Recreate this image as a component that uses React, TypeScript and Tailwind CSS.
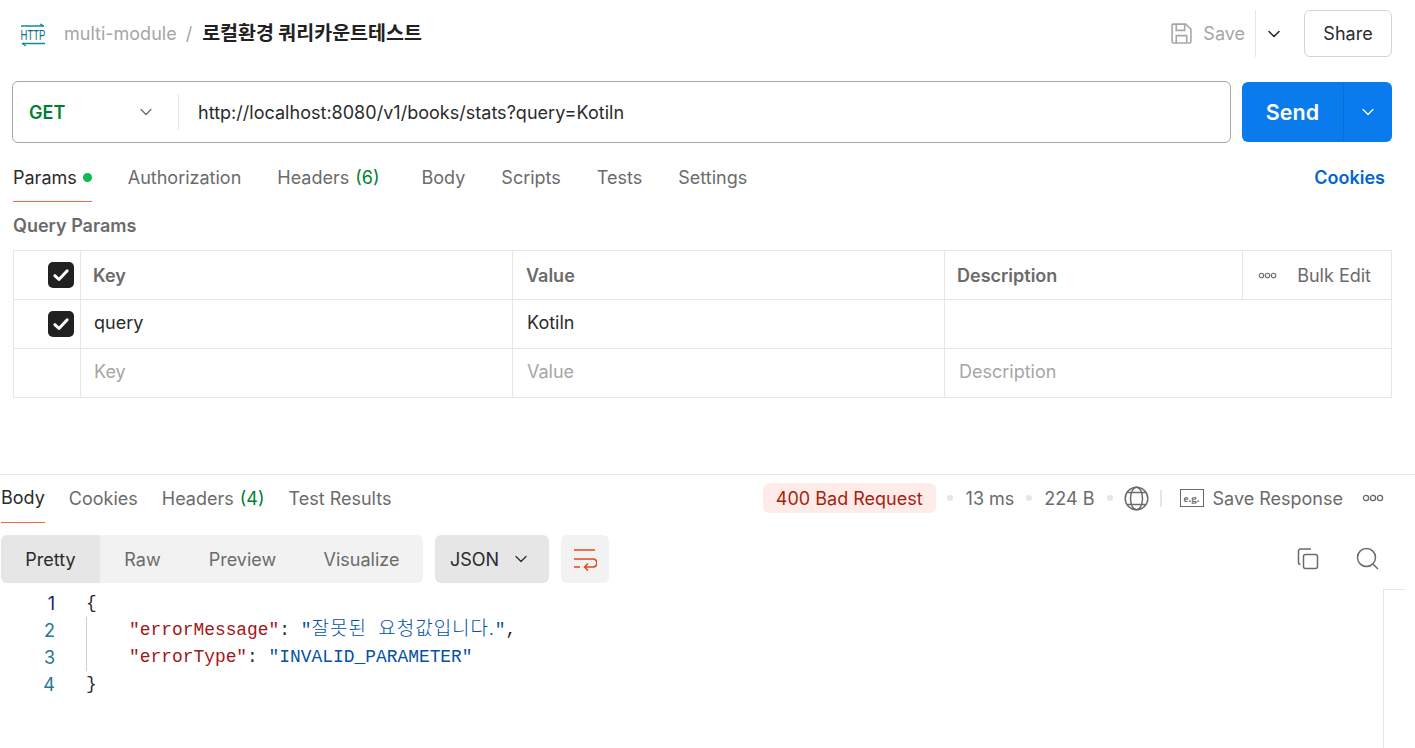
import { ChevronDown } from "lucide-react";

const mono = "font-['Liberation_Mono',monospace]";

function CheckBox() {
  return (
    <div className="flex size-[26px] items-center justify-center rounded-[5px] bg-[#212121]">
      <svg viewBox="0 0 16 16" className="size-[18px]" fill="none" stroke="#fff" strokeWidth="2.6" strokeLinecap="round" strokeLinejoin="round">
        <path d="M2.5 8.6 6.2 12 13.5 4.2" />
      </svg>
    </div>
  );
}

function Dots({ className = "" }: { className?: string }) {
  return (
    <svg viewBox="0 0 22 8" className={`h-[8px] w-[22px] ${className}`} fill="none" stroke="#6b6b6b" strokeWidth="1.3">
      <circle cx="4" cy="4" r="2.6" />
      <circle cx="11" cy="4" r="2.6" />
      <circle cx="18" cy="4" r="2.6" />
    </svg>
  );
}

function Sep({ className = "" }: { className?: string }) {
  return <span className={`block size-[6px] shrink-0 rounded-full bg-[#e6e6e6] ${className}`} />;
}

function Row({ h, check, a, b, c, muted, head, extra }: { h: string; check?: boolean; a: string; b: string; c?: string; muted?: boolean; head?: boolean; extra?: boolean }) {
  const tone = head ? "font-semibold text-[#6b6b6b]" : muted ? "text-[#a6a6a6]" : "text-[#2b2b2b]";
  const drop = head ? "" : muted ? "pb-[4px]" : "pb-[3px]";
  return (
    <div className={`flex ${h} border-b border-[#e6e6e6] text-[18px] ${tone}`}>
      <div className="flex w-[67px] shrink-0 items-center justify-end border-r border-[#e6e6e6] pr-[6px]">{check && <CheckBox />}</div>
      <div className={`flex w-[432px] shrink-0 items-center border-r border-[#e6e6e6] ${head ? "pl-3" : "pl-[13px]"} ${drop}`}>{a}</div>
      <div className={`flex w-[432px] shrink-0 items-center border-r border-[#e6e6e6] ${head ? "pl-[13px]" : "pl-[14px]"} ${drop}`}>{b}</div>
      <div className={`flex flex-1 items-center ${head ? "pl-3" : "pl-[14px]"} ${drop}`}>{c}</div>
      {extra && (
        <div className="flex w-[149px] shrink-0 items-center justify-between border-l border-[#e6e6e6] pl-[15px] pr-5 font-normal">
          <Dots className="!h-[7px] !w-[19px]" />
          <span>Bulk Edit</span>
        </div>
      )}
    </div>
  );
}

export default function App() {
  return (
    <div className="relative h-[748px] w-[1415px] overflow-hidden bg-white font-['Inter',sans-serif] text-[18px] text-[#2b2b2b]">
      {/* top bar */}
      <div className="flex h-[81px] items-start pl-5 pr-[23px] pt-[10px]">
        <div className="flex h-[47px] items-center">
          <svg viewBox="0 0 26 26" className="size-[26px]" fill="none" stroke="#0e8c9e" strokeWidth="1.3">
            <path d="M1 5h23M20 3l4 2M2 22.5h23M2 22.5l4 2.5" />
            <text transform="translate(13 19) scale(0.68 1)" textAnchor="middle" fontSize="14" fontFamily="Liberation Sans" fill="#0b6f80" stroke="none">HTTP</text>
          </svg>
          <span className="ml-[18px] text-[#a6a6a6]">multi-module</span>
          <span className="ml-[9px] text-[#a6a6a6]">/</span>
          <span className="ml-[10px] pb-[3px] font-['Noto_Sans_CJK_KR',sans-serif] text-[19.5px] font-bold text-[#212121]">로컬환경 쿼리카운트테스트</span>
        </div>
        <div className="ml-auto flex items-center">
          <svg viewBox="0 0 22 22" className="size-[23px]" fill="none" stroke="#a6a6a6" strokeWidth="1.5">
            <path d="M2 3a1 1 0 0 1 1-1h12l5 5v12a1 1 0 0 1-1 1H3a1 1 0 0 1-1-1zM6 2v6h8V2M6 20v-7h10v7" />
          </svg>
          <span className="ml-[10px] text-[#a6a6a6]">Save</span>
          <div className="ml-[10px] flex h-[47px] w-[38px] items-center justify-center border-l border-[#e6e6e6] pr-px">
            <ChevronDown className="size-[20px] text-[#212121]" strokeWidth={1.75} />
          </div>
          <div className="ml-[11px] flex h-[47px] w-[88px] items-center justify-center rounded-[6px] border border-[#d4d4d4]">Share</div>
        </div>
      </div>

      {/* url bar */}
      <div className="flex h-[62px] pl-3 pr-[23px]">
        <div className="flex h-[62px] w-[1219px] items-center rounded-[6px] border border-[#a6a6a6]">
          <div className="flex w-[165px] items-center justify-between pl-4 pr-[22px]">
            <span className="font-semibold text-[#007f31]">GET</span>
            <ChevronDown className="size-[20px] text-[#6b6b6b]" strokeWidth={1.5} />
          </div>
          <div className="h-[36px] w-px bg-[#e6e6e6]" />
          <span className="pl-[19px] tracking-[0.02px]">http://localhost:8080/v1/books/stats?query=Kotiln</span>
        </div>
        <div className="ml-[11px] mt-px flex h-[60px] w-[150px] rounded-[6px] bg-[#097bed] text-white">
          <div className="flex w-[102px] items-center justify-center border-r border-[#0a6fd4] text-[21.5px] font-semibold">Send</div>
          <div className="flex flex-1 items-center justify-center">
            <ChevronDown className="size-[20px]" strokeWidth={1.5} />
          </div>
        </div>
      </div>

      {/* request tabs */}
      <div className="flex h-[59px] pl-[13px] pr-[30px] pt-[1px] text-[#6b6b6b]">
        <div className="mr-[36px] flex h-[58px] items-center gap-[6px] border-b border-[#f26b3a] pt-[9px] text-[#2b2b2b]">
          Params <span className="size-[9px] rounded-full bg-[#0cbb52]" />
        </div>
        <div className="mr-[36px] flex h-[58px] items-center pt-[9px]">Authorization</div>
        <div className="mr-[42px] flex h-[58px] items-center gap-[6px] pt-[9px]">
          Headers <span className="text-[#007f31]">(6)</span>
        </div>
        <div className="mr-[36px] flex h-[58px] items-center pt-[9px]">Body</div>
        <div className="mr-[36px] flex h-[58px] items-center pt-[9px]">Scripts</div>
        <div className="mr-[36px] flex h-[58px] items-center pt-[9px]">Tests</div>
        <div className="flex h-[58px] items-center pt-[9px]">Settings</div>
        <div className="ml-auto flex h-[58px] items-center pt-[9px] font-semibold text-[#0265d2]">Cookies</div>
      </div>

      {/* query params */}
      <div className="px-[13px]">
        <div className="flex h-[48px] items-center pb-[1px] font-semibold text-[#6b6b6b]">Query Params</div>
        <div className="w-[1379px] border-x border-t border-[#e6e6e6]">
          <Row h="h-[49px]" check head a="Key" b="Value" c="Description" extra />
          <Row h="h-[49px]" check a="query" b="Kotiln" />
          <Row h="h-[49px]" muted a="Key" b="Value" c="Description" />
        </div>
      </div>

      {/* response */}
      <div className="mt-[76px] border-t border-[#e6e6e6]">
        <div className="flex h-[48px] items-center pl-px pr-[31px] text-[#6b6b6b]">
          <div className="mr-6 flex h-[48px] items-center border-b border-[#f26b3a] pb-[2px] text-[#2b2b2b]">Body</div>
          <div className="flex h-[48px] items-center pb-[2px]">
            <span className="mr-6">Cookies</span>
            <span className="mr-[6px]">Headers</span>
            <span className="mr-6 text-[#007f31]">(4)</span>
            <span>Test Results</span>
          </div>
          <div className="ml-auto flex h-[48px] items-center pb-[2px]">
            <span className="flex h-[30px] items-center rounded-[6px] bg-[#ffebe7] px-[13px] text-[#a61f0e]">400 Bad Request</span>
            <Sep className="ml-[11px]" />
            <span className="ml-[13px]">13 ms</span>
            <Sep className="ml-[12px]" />
            <span className="ml-[12px]">224 B</span>
            <Sep className="ml-[12px]" />
            <svg viewBox="0 0 25 25" className="ml-[11px] size-[25px]" fill="none" stroke="#6b6b6b" strokeWidth="1.5">
              <circle cx="12.5" cy="12.5" r="11.3" />
              <ellipse cx="12.5" cy="12.5" rx="6" ry="11.3" />
              <path d="M3 6.5h19M3 18.5h19" />
            </svg>
            <div className="ml-[11px] h-[17px] w-[2px] bg-[#e6e6e6]" />
            <div className="ml-[18px] flex h-[18px] w-[24px] items-center justify-center border-[1.5px] border-[#6b6b6b] font-['Liberation_Serif',serif] text-[11px] font-bold leading-none">e.g.</div>
            <span className="ml-[9px]">Save Response</span>
            <Dots className="ml-[19px]" />
          </div>
        </div>

        <div className="mt-[12px] flex h-[48px] items-center pl-px pr-[35px]">
          <div className="flex h-[48px] w-[422px] overflow-hidden rounded-[6px] bg-[#f2f2f2] text-[#6b6b6b]">
            <div className="flex w-[99px] items-center justify-center bg-[#e6e6e6] text-[#2b2b2b]">Pretty</div>
            <div className="flex w-[85px] items-center justify-center">Raw</div>
            <div className="flex w-[115px] items-center justify-center">Preview</div>
            <div className="flex flex-1 items-center justify-center">Visualize</div>
          </div>
          <div className="ml-3 flex h-[48px] w-[114px] items-center justify-between rounded-[6px] bg-[#e6e6e6] pl-[15px] pr-[18px]">
            JSON
            <ChevronDown className="size-[20px]" strokeWidth={1.5} />
          </div>
          <div className="ml-3 flex size-[48px] items-center justify-center rounded-[6px] bg-[#f2f2f2]">
            <svg viewBox="0 0 24 24" className="size-[24px]" fill="none" stroke="#e0481c" strokeWidth="1.5">
              <path d="M1 3h21M1 12h20M1 20h6M21 12a4.2 4.2 0 0 1 0 8h-9M15 16.5l-3.5 3.5 3.5 3.5" />
            </svg>
          </div>
          <svg viewBox="0 0 24 24" className="ml-auto size-[24px]" fill="none" stroke="#6b6b6b" strokeWidth="1.5">
            <rect x="7.5" y="7.5" width="14" height="14" rx="2" />
            <path d="M15 2H4.5a2 2 0 0 0-2 2v11.5a2 2 0 0 0 2 2" />
          </svg>
          <svg viewBox="0 0 24 24" className="ml-[36px] size-[24px]" fill="none" stroke="#6b6b6b" strokeWidth="1.5">
            <circle cx="10.5" cy="10.5" r="9" />
            <path d="m17 17 5 5" />
          </svg>
        </div>

        <div className={`relative mt-[7px] text-[17.9px] leading-[27px] ${mono}`}>
          <div className="flex">
            <div className="w-[55px] text-right font-['Inter',sans-serif] text-[18px]">
              <div className="h-[27px] text-[#15227d]">1</div>
              <div className="h-[27px] text-[#237893]">2</div>
              <div className="h-[27px] text-[#237893]">3</div>
              <div className="h-[27px] text-[#237893]">4</div>
            </div>
            <div className="relative ml-[31px]">
              <div className="h-[27px] text-[#2b2b2b]">{"{"}</div>
              <div className="border-l border-[#cfcfcf] pl-[42px]">
                <div className="h-[27px] whitespace-pre">
                  <span className="text-[#a31515]">"errorMessage"</span>
                  <span className="text-[#2b2b2b]">: </span>
                  <span className="text-[#0451a5]">"</span>
                  <span className="font-['Noto_Sans_CJK_KR',sans-serif] text-[19px] font-light leading-[20px] tracking-[1px] text-[#0451a5] [word-spacing:6px]">잘못된 요청값입니다.</span>
                  <span className="text-[#0451a5]">"</span>
                  <span className="text-[#2b2b2b]">,</span>
                </div>
                <div className="h-[27px] whitespace-pre">
                  <span className="text-[#a31515]">"errorType"</span>
                  <span className="text-[#2b2b2b]">: </span>
                  <span className="text-[#0451a5]">"INVALID_PARAMETER"</span>
                </div>
              </div>
              <div className="h-[27px] text-[#2b2b2b]">{"}"}</div>
            </div>
          </div>
          <div className="absolute left-[1383px] top-[-1px] h-[170px] w-[22px] border-l border-t border-[#e6e6e6]" />
        </div>
      </div>
    </div>
  );
}
